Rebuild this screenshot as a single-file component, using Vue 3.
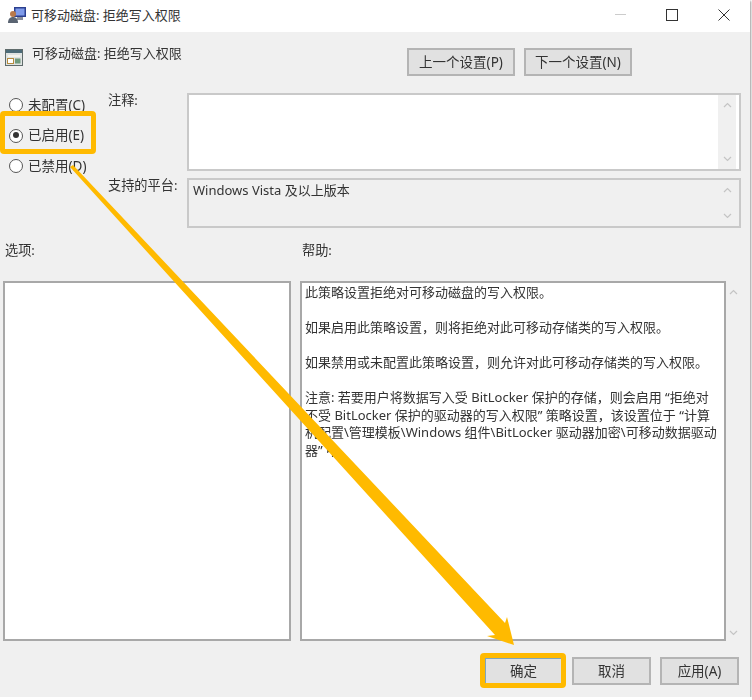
<template>
  <div class="win">
    <div class="titlebar">
      <svg class="app-icon" width="20" height="20" viewBox="0 0 20 20">
        <rect x="6" y="2" width="12" height="10" fill="#2b3f8f" />
        <rect x="7.5" y="3.5" width="9" height="7" fill="#7f9bea" />
        <rect x="9" y="12" width="6" height="3" fill="#8a8f9c" />
        <circle cx="5" cy="9" r="3" fill="#b9794a" />
        <path d="M0 18c0-4 2-6 5-6s5 2 5 6z" fill="#5a6472" />
      </svg>
      <span class="title">可移动磁盘: 拒绝写入权限</span>
      <div class="controls">
        <span class="min"></span>
        <span class="max"></span>
        <svg width="12" height="12" viewBox="0 0 12 12">
          <path d="M0.5 0.5l11 11M11.5 0.5l-11 11" stroke="#333" stroke-width="1" fill="none" />
        </svg>
      </div>
    </div>

    <div class="content">
      <div class="head">
        <div class="head-title">
          <svg width="19" height="19" viewBox="0 0 19 19">
            <rect x="0.5" y="1.5" width="17" height="16" fill="#dfe3e2" stroke="#5f6b6b" />
            <rect x="1" y="2" width="16" height="3" fill="#4c6b78" />
            <rect x="3" y="7" width="12" height="2" fill="#f4f4ee" />
            <rect x="2.5" y="10.5" width="6" height="5" fill="#fff" stroke="#b58a3c" />
            <rect x="10" y="10.5" width="5.5" height="5" fill="#6f9a7c" />
          </svg>
          <span>可移动磁盘: 拒绝写入权限</span>
        </div>
        <div class="nav">
          <button class="btn nav-btn">上一个设置(P)</button>
          <button class="btn nav-btn">下一个设置(N)</button>
        </div>
      </div>

      <div class="config">
        <div class="radios">
          <div v-for="r in radios" :key="r.text" class="radio">
            <span class="dot" :class="{ on: r.on }"></span>
            <span class="radio-text">{{ r.text }}</span>
          </div>
        </div>
        <div class="lbl lbl-note">注释:</div>
        <div class="field note">
          <div class="field-main"></div>
          <div class="scroll">
            <svg v-for="d in chevrons" :key="d" width="9" height="6" viewBox="0 0 9 6"><path :d="d" stroke="#c4c4c4" stroke-width="1.2" fill="none" /></svg>
          </div>
        </div>
        <div class="lbl lbl-plat">支持的平台:</div>
        <div class="field plat">
          <div class="field-main">Windows Vista 及以上版本</div>
          <div class="scroll">
            <svg v-for="d in chevrons" :key="d" width="9" height="6" viewBox="0 0 9 6"><path :d="d" stroke="#c4c4c4" stroke-width="1.2" fill="none" /></svg>
          </div>
        </div>
      </div>

      <div class="panes">
        <div class="pane-col">
          <div class="pane-lbl">选项:</div>
          <div class="pane"></div>
        </div>
        <div class="pane-col">
          <div class="pane-lbl">帮助:</div>
          <div class="help-wrap">
            <div class="pane help">
              <div v-for="(l, i) in helpLines" :key="i" class="line">{{ l }}</div>
            </div>
            <div class="scroll help-scroll">
              <svg v-for="d in chevrons" :key="d" width="9" height="6" viewBox="0 0 9 6"><path :d="d" stroke="#c4c4c4" stroke-width="1.2" fill="none" /></svg>
            </div>
          </div>
        </div>
      </div>

      <div class="footer">
        <button class="btn foot-btn primary">确定</button>
        <button class="btn foot-btn">取消</button>
        <button class="btn foot-btn">应用(A)</button>
      </div>
    </div>

    <div class="mark mark-radio"></div>
    <div class="mark mark-ok"></div>
    <svg class="arrow" width="752" height="700" viewBox="0 0 752 700">
      <polygon points="73,165 505,623 507,617 514,645 487,636 495,635 70,167" fill="#ffba00" />
    </svg>
  </div>
</template>

<script setup>
const radios = [
  { text: '未配置(C)', on: false },
  { text: '已启用(E)', on: true },
  { text: '已禁用(D)', on: false },
]

const chevrons = ['M1 5l3.5-3.5L8 5', 'M1 1l3.5 3.5L8 1']

const helpLines = [
  '此策略设置拒绝对可移动磁盘的写入权限。',
  '\u00a0',
  '如果启用此策略设置，则将拒绝对此可移动存储类的写入权限。',
  '\u00a0',
  '如果禁用或未配置此策略设置，则允许对此可移动存储类的写入权限。',
  '\u00a0',
  '注意: 若要用户将数据写入受 BitLocker 保护的存储，则会启用 “拒绝对',
  '不受 BitLocker 保护的驱动器的写入权限” 策略设置，该设置位于 “计算',
  '机配置\\管理模板\\Windows 组件\\BitLocker 驱动器加密\\可移动数据驱动',
  '器” 中。',
]
</script>

<style>
html, body {
  margin: 0;
  background: #fff;
}
</style>

<style scoped>
.win {
  position: relative;
  width: 750px;
  height: 697px;
  overflow: visible;
  font-family: "Noto Sans", "Noto Sans CJK SC", sans-serif;
  font-size: 13px;
  color: #333;
  background: #f0f0f0;
  box-shadow: 1px 1px 2px #999;
  filter: blur(0.45px);
}

.titlebar {
  height: 32px;
  background: #fff;
  display: flex;
  align-items: center;
  padding: 0 0 3px 8px;
  box-sizing: border-box;
}

.app-icon {
  margin-right: 3px;
}

.title {
  flex: 1;
  font-size: 13px;
}

.controls {
  display: flex;
  align-items: center;
}

.min {
  width: 11px;
  height: 1px;
  background: #ccc;
  margin-right: 40px;
}

.max {
  width: 10px;
  height: 10px;
  border: 1px solid #333;
  margin-right: 40px;
}

.controls svg {
  margin-right: 20px;
}

.head {
  display: flex;
  justify-content: space-between;
  padding: 16px 118px 0 5px;
  height: 28px;
}

.head-title {
  display: flex;
  align-items: flex-start;
  gap: 8px;
}

.head-title span {
  line-height: 12px;
  margin-top: -1px;
}

.nav {
  display: flex;
  gap: 9px;
}

.btn {
  font-family: inherit;
  font-size: 13.5px;
  line-height: 20px;
  color: #333;
  background: #e1e1e1;
  border: 2px solid #b4b4b4;
  padding: 0 0 1px;
  box-sizing: border-box;
}

.nav-btn {
  width: 108px;
  height: 28px;
}

.config {
  margin-top: 17px;
  display: grid;
  grid-template-columns: 108px 79px 554px;
  grid-template-rows: 78px 50px;
  row-gap: 7px;
}

.radios {
  grid-row: 1 / 3;
  display: flex;
  flex-direction: column;
  gap: 8.5px;
  padding: 1px 0 0 9px;
}

.radio {
  display: flex;
  align-items: center;
  gap: 5px;
  height: 22px;
  white-space: nowrap;
}

.radio-text {
  font-size: 13.5px;
  line-height: 16px;
  margin-top: -1px;
}

.dot {
  width: 14px;
  height: 14px;
  border: 1.5px solid #555;
  border-radius: 50%;
  background: #fff;
  box-sizing: border-box;
  position: relative;
}

.dot.on::after {
  content: "";
  position: absolute;
  left: 2.5px;
  top: 2.5px;
  width: 6px;
  height: 6px;
  border-radius: 50%;
  background: #333;
}

.lbl {
  grid-column: 2;
  line-height: 14px;
  font-size: 13.2px;
}

.lbl-note {
  grid-row: 1;
}

.lbl-plat {
  grid-row: 2;
}

.field {
  grid-column: 3;
  display: flex;
  border: 2px solid #c9c9c9;
  box-sizing: border-box;
}

.note {
  grid-row: 1;
  background: #fff;
}

.plat {
  grid-row: 2;
  background: #f0f0f0;
}

.field-main {
  flex: 1;
  padding: 0 4px;
  line-height: 20px;
}

.scroll {
  width: 18px;
  margin-right: 3px;
  background: #f0f0f0;
  display: flex;
  flex-direction: column;
  justify-content: space-between;
  align-items: center;
  padding: 7px 0;
  box-sizing: border-box;
}

.panes {
  display: grid;
  grid-template-columns: 288px 441px;
  column-gap: 9px;
  padding-left: 3px;
  margin-top: 13px;
}

.pane-col {
  display: flex;
  flex-direction: column;
}

.pane-lbl {
  height: 40px;
  padding-left: 2px;
  line-height: 18px;
  font-size: 13.2px;
}

.pane {
  height: 360px;
  background: #fff;
  border: 2px solid #a8a8a8;
  box-sizing: border-box;
}

.help-wrap {
  display: flex;
}

.help {
  width: 426px;
  padding: 1px 0 0 3px;
  line-height: 17.5px;
}

.line {
  white-space: nowrap;
}

.help-scroll {
  width: 15px;
  margin-right: 0;
  padding: 8px 0 5px;
}

.footer {
  display: flex;
  justify-content: flex-end;
  gap: 9px;
  padding-right: 11px;
  margin-top: 16px;
}

.foot-btn {
  width: 79px;
  height: 28px;
}

.primary {
  border-left-color: #7fa6bb;
  border-top-color: #7fa6bb;
}

.mark {
  position: absolute;
  border: 5px solid #ffba00;
  border-radius: 4px;
  box-sizing: border-box;
}

.mark-radio {
  left: 0;
  top: 111px;
  width: 96px;
  height: 43px;
}

.mark-ok {
  left: 480px;
  top: 653px;
  width: 86px;
  height: 35px;
}

.arrow {
  position: absolute;
  left: 0;
  top: 0;
  pointer-events: none;
}
</style>
